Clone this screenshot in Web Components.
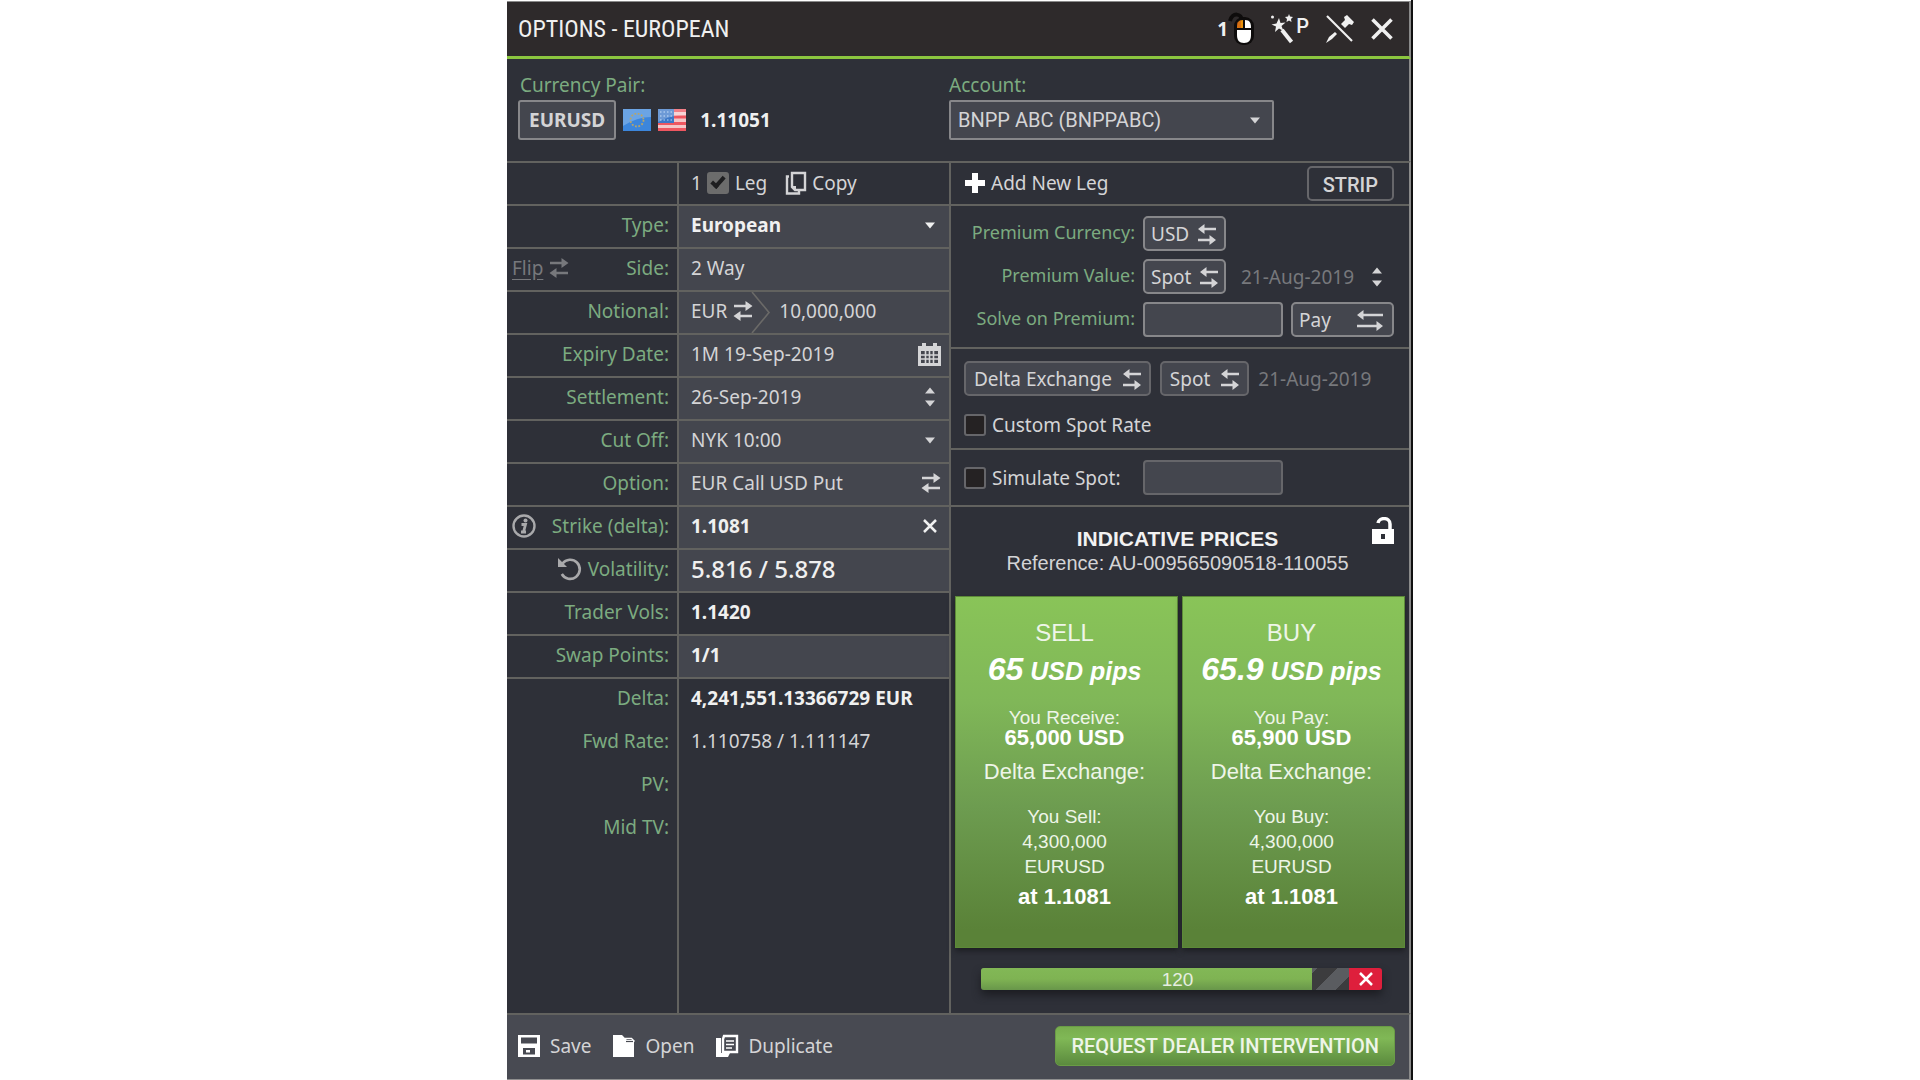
<!DOCTYPE html>
<html lang="en">
<head>
<meta charset="utf-8">
<title>Options - European</title>
<style>
  html, body { margin: 0; background: #fff; }
  body { min-height: 100vh; display: flex; justify-content: center; font-family: "Noto Sans", "Open Sans", sans-serif; }
</style>
</head>
<body>
<options-ticket></options-ticket>
<script>
const BASE = `
  *, *::before { box-sizing: border-box; }
  button, input, select { font: inherit; color: inherit; margin: 0; }
  button { cursor: pointer; }
  .plain { background: none; border: 0; padding: 0; display: inline-flex; align-items: center; }
  input, select { appearance: none; border-radius: 0; outline: 0; }
`;

function define(name, html, after) {
  const template = document.createElement('template');
  template.innerHTML = html;
  customElements.define(name, class extends HTMLElement {
    connectedCallback() {
      if (this.shadowRoot) return;
      this.attachShadow({ mode: 'open' }).append(template.content.cloneNode(true));
      if (after) after.call(this, this.shadowRoot);
    }
  });
}

/* Icons: [width, height, markup] */
const ICONS = {
  caret: [22, 22, '<path d="M6 8.500h10l-5 6z" fill="currentColor"/>'],
  spin: [22, 22, '<path d="M6 7.500h10l-5-6zM6 14.500h10l-5 6z" fill="currentColor"/>'],
  swap: [20, 20, '<path d="M1 5h12M7 15h12" stroke="currentColor" stroke-width="2.600"/><path d="M12.500 0l7 5-7 5zM7.500 10l-7 5 7 5z" fill="currentColor"/>'],
  swapBack: [18, 22, '<path d="M5 6h13M0 17h12" stroke="currentColor" stroke-width="2.600"/><path d="M6.500 1L0 6l6.500 5zM11.500 12l6.500 5-6.500 5z" fill="currentColor"/>'],
  swapWide: [28, 22, '<path d="M5 6h22M1 17h21" stroke="currentColor" stroke-width="2.400"/><path d="M7.500 1L1 6l6.500 5zM20.500 12l6.500 5-6.500 5z" fill="currentColor"/>'],
  close: [16, 16, '<path d="M2 2l12 12M14 2L2 14" stroke="currentColor" stroke-width="2.500"/>'],
  closeBig: [22, 22, '<path d="M1.500 1.500l19 19M20.500 1.500l-19 19" stroke="currentColor" stroke-width="3.600"/>'],
  calendar: [23, 23, '<path d="M1 3h3V0h4v3h7V0h4v3h4v20H0V3z" fill="currentColor"/><path d="M3 8h17v12H3z" fill="#44464e"/><path d="M3 12h17M3 16h17M7.500 8v12M11.500 8v12M15.500 8v12" stroke="currentColor" stroke-width="1.600"/>'],
  plus: [22, 22, '<path d="M11 1v20M1 11h20" stroke="currentColor" stroke-width="6"/>'],
  copy: [22, 24, '<path d="M7 2h13v17H10l-3-3z" fill="none" stroke="currentColor" stroke-width="2.400"/><path d="M4 5.500H2v17h12v-3" fill="none" stroke="currentColor" stroke-width="2.400"/><path d="M6 15l5 5v-5z" fill="currentColor"/>'],
  info: [24, 24, '<circle cx="12" cy="12" r="10.500" fill="none" stroke="currentColor" stroke-width="2.400"/><circle cx="13.500" cy="6.500" r="2" fill="currentColor"/><path d="M9.500 10.500h4l-2 7.500M9 18h5" fill="none" stroke="currentColor" stroke-width="2.800"/>'],
  undo: [24, 24, '<path d="M4.500 6.500A9.600 9.600 0 1 1 3.800 17" fill="none" stroke="currentColor" stroke-width="2.600"/><path d="M0 1v9h9z" fill="currentColor"/>'],
  lock: [24, 28, '<path d="M1 12h22v15H1z" fill="currentColor"/><path d="M7 6c1-6 12-6 12 1v6" fill="none" stroke="currentColor" stroke-width="3.500"/><path d="M10 17h4v5h-4z" fill="#2e3038"/>'],
  save: [24, 24, '<path d="M1 1h22v22H1z" fill="currentColor"/><path d="M4 3.500h16v6H4zM6 14h12v6.500H6z" fill="#484a52"/><path d="M9 16h4v2.500H9z" fill="currentColor"/>'],
  open: [24, 24, '<path d="M1 1h9l5 5h7v17H1z" fill="currentColor"/><path d="M13 4.500h6.500l3 3" fill="none" stroke="currentColor" stroke-width="1.400"/><path d="M14 7.500h7" stroke="#484a52" stroke-width="1.200"/>'],
  duplicate: [24, 24, '<path d="M1 4h5v15h9l-2 4H1z" fill="currentColor"/><path d="M9 2h13v16H8V5z" fill="none" stroke="currentColor" stroke-width="2.400"/><path d="M11 7h8M11 10.500h8M11 14h6" stroke="currentColor" stroke-width="1.400"/>'],
  mouse: [26, 34, '<path d="M14 9C14 1 4 0 2 9" fill="none" stroke="#0e0c0c" stroke-width="4"/><rect x="6" y="5" width="20" height="28" rx="9" fill="#0e0c0c"/><path d="M15 8v8H9c0-5 1-8 6-8z" fill="#e8920c"/><path d="M9 10.500l4-2V16H9z" fill="#c8501a" opacity=".5"/><path d="M17 8c5 0 6 3 6 8h-6z" fill="#fff"/><path d="M9 18h14v5c0 5-2 8-7 8s-7-3-7-8z" fill="#fff"/>'],
  wand: [24, 30, '<path d="M9 4l1.500 5 5-.500-4 3.500 2 5-4.500-2.500-4 3.500 1-5.500-4.500-2 5-1z" fill="currentColor"/><path d="M12 16l9.500 12" stroke="currentColor" stroke-width="4"/><path d="M19 0l1 2.500 3 .500-2 2 .500 3-2.500-1.500-2.500 1.500.500-3-2-2 3-.500z" fill="currentColor"/><circle cx="2.500" cy="3" r="1.500" fill="currentColor"/>'],
  pin: [30, 30, '<path d="M2 2l25 25" stroke="currentColor" stroke-width="2.200"/><path d="M1 29l3-6 6-5 2 2-5 5z" fill="currentColor"/><path d="M16 10l4-4-1-3 3-2 7 7-2 3-3-1-4 4z" fill="currentColor"/>'],
  eu: [28, 22, '<path d="M0 0h28v22H0z" fill="#3c86dc"/><path d="M0 0h28v8Q14 8 0 17z" fill="#6ba4e4"/><circle cx="14" cy="11" r="6.500" fill="none" stroke="#b5a56c" stroke-width="1.800" stroke-dasharray="1.800 1.600"/>'],
  us: [28, 22, '<path d="M0 0h28v22H0z" fill="#f4c6c8"/><path d="M0 1.500h28M0 8h28M0 14.500h28M0 20.500h28" stroke="#ee5660" stroke-width="3.200"/><path d="M0 0h16v14H0z" fill="#3c78c8"/><path d="M2 3h12M2 7h12M2 11h12" stroke="#8fb6e6" stroke-width="1.500" stroke-dasharray="1.500 2"/><path d="M0 0h28v6Q12 6 0 13z" fill="#fff" opacity=".25"/>'],
  chevron: [20, 41, '<path d="M1 0l17 20.500L1 41" fill="none" stroke="#6b6a68" stroke-width="1.600"/>']
};
define('ui-icon', `<style>:host{display:inline-flex;flex:none}svg{display:block}</style>`, function (root) {
  const [w, h, body] = ICONS[this.getAttribute('name')];
  root.append(document.createRange().createContextualFragment(
    `<svg width="${w}" height="${h}" viewBox="0 0 ${w} ${h}" aria-hidden="true">${body}</svg>`));
});

/* Outlined button with an optional icon */
define('pill-button', `<style>${BASE}
  :host { display: inline-flex; --line: #87878a; --pad: 6px; --gap: 9px; }
  :host([dim]) { --line: #66666a; --pad: 8px; --gap: 11px; }
  button { width: 100%; min-height: 35px; padding: 0 8px 0 var(--pad); display: flex; align-items: center; justify-content: space-between; gap: var(--gap);
    background: #44464e; border: 2px solid var(--line); border-radius: 5px; white-space: nowrap; line-height: 24px; }
  :host([strong]) button { min-height: 40px; padding: 0 9px; font-weight: 700; border-radius: 3px; }
  :host([strip]) button { background: none; justify-content: center; padding: 2px 14px 0; font: 500 20px Roboto, sans-serif; }
</style><button type="button"><slot></slot></button>`);

/* Tick box with its label */
define('tick-box', `<style>${BASE}
  :host { display: flex; }
  label { display: flex; align-items: center; gap: 6px; }
  input { width: 22px; height: 22px; background: #252223; border: 2px solid #66666a; border-radius: 3px; display: grid; place-items: center; }
  input:checked { background: #6c6c6c; border-color: #6c6c6c; }
  input:checked::before { content: ""; width: 14px; height: 8px; border: solid #1e1e20; border-width: 0 0 4px 4px; rotate: -48deg; translate: 0 -2px; }
</style><label><input type="checkbox"><slot></slot></label>`, function (root) {
  root.querySelector('input').checked = this.hasAttribute('checked');
});

/* One label / value line of the leg column */
define('leg-row', `<style>${BASE}
  :host { display: grid; grid-template-columns: 172fr 272fr; min-height: 43px; }
  .label, .value { display: flex; align-items: center; border: 0 solid #62625f; border-right-width: 2px; border-bottom-width: 2px; padding-bottom: 3px; min-width: 0; }
  .label { padding-left: 5px; padding-right: 8px; gap: 6px; color: #7cab80; }
  label { margin-left: auto; white-space: nowrap; }
  :host([hug]) label { margin-left: 0; }
  :host([hug]) .label { justify-content: flex-end; }
  .value { background: #44464e; padding-left: 12px; padding-right: 8px; }
  :host([dark]) .value { background: none; }
  :host([open]) .label, :host([open]) .value { border-bottom-width: 0; padding-bottom: 5px; }
  :host([bold]) .value { font-weight: 700; color: #f0f0f0; }
  :host([large]) .value { font-size: 24px; font-weight: 500; color: #f0f0f0; }
  #field { flex: 1; width: 0; min-width: 0; background: none; border: 0; padding: 0; white-space: nowrap; }
  ::slotted([slot=prefix]) { align-self: stretch; margin-bottom: -3px; }
</style>
<div class="label"><slot name="lead"></slot><label for="field"></label></div>
<div class="value"><slot name="prefix"></slot><slot name="post"></slot></div>`, function (root) {
  const label = root.querySelector('label');
  label.textContent = this.getAttribute('label') || '';
  const kind = this.getAttribute('kind'), value = this.getAttribute('value') || '';
  if (kind === 'none') { label.remove(); return; }
  const field = document.createElement(kind || 'input');
  field.id = 'field';
  if (kind === 'select') field.add(new Option(value));
  else field.value = value;
  root.querySelector('slot[name=post]').before(field);
});

define('ticket-title', `<style>${BASE}
  :host { display: flex; align-items: center; height: 58px; border-top: 1px solid #8a8a8a; border-bottom: 3px solid #8cc63f; background: #2e2a2b; padding: 0 16px 0 11px; color: #f0f0f0; }
  h1 { margin: 0; flex: 1; font: 400 24px/40px "Roboto Condensed", "Liberation Sans Narrow", "Liberation Sans", sans-serif; }
  nav { display: flex; align-items: center; gap: 16px; }
  .one { font: 700 19px "Noto Sans", sans-serif; }
  .p { font: 500 20px Roboto, sans-serif; align-self: flex-start; margin-left: 2px; }
</style>
<h1>OPTIONS - EUROPEAN</h1>
<nav>
  <button class="plain" aria-label="One click"><span class="one">1</span><ui-icon name="mouse"></ui-icon></button>
  <button class="plain" aria-label="Preferences"><ui-icon name="wand"></ui-icon><span class="p">P</span></button>
  <button class="plain" aria-label="Unpin"><ui-icon name="pin"></ui-icon></button>
  <button class="plain" aria-label="Close"><ui-icon name="closeBig"></ui-icon></button>
</nav>`);

define('ticket-header', `<style>${BASE}
  :host { display: grid; grid-template-columns: 442fr 460fr; padding: 13px 0 21px; }
  .label { display: block; color: #7cab80; line-height: 26px; margin-bottom: 2px; padding-left: 2px; }
  .pair { padding-left: 11px; }
  .line { display: flex; align-items: center; gap: 7px; }
  b { margin-left: 7px; color: #f0f0f0; }
  .account .label { padding-left: 0; }
  .select { display: flex; align-items: center; width: 325px; max-width: 100%; height: 40px; background: #44464e; border: 2px solid #87878a; border-radius: 2px; padding-right: 6px; }
  select { flex: 1; min-width: 0; height: 100%; border: 0; background: none; padding: 0 0 0 7px; font: 400 20px Roboto, sans-serif; }
</style>
<div class="pair"><span class="label">Currency Pair:</span>
  <div class="line"><pill-button strong>EURUSD</pill-button><ui-icon name="eu"></ui-icon><ui-icon name="us"></ui-icon><b>1.11051</b></div></div>
<div class="account"><label class="label" for="account">Account:</label>
  <div class="select"><select id="account"><option>BNPP ABC (BNPPABC)</option></select><ui-icon name="caret"></ui-icon></div></div>`);

define('leg-column', `<style>${BASE}
  :host { display: flex; flex-direction: column; }
  .rest { flex: 1; }
  .leg { display: flex; align-items: center; gap: 5px; padding-bottom: 2px; }
  .leg .plain { margin-left: 13px; gap: 5px; }
  a { color: #77787c; display: flex; gap: 6px; align-items: center; text-decoration: none; }
  u { text-underline-offset: 4px; }
  .grey { color: #a9a9ab; }
  .ccy { display: flex; align-items: center; }
  .ccy .plain { gap: 6px; padding-bottom: 3px; margin-right: -2px; }
  .ccy ui-icon[name=chevron] { margin-right: 8px; }
  .clear { padding: 0 3px; }
</style>
<leg-row kind="none" dark><div slot="prefix" class="leg">1 <tick-box checked>Leg</tick-box><button class="plain"><ui-icon name="copy"></ui-icon>Copy</button></div></leg-row>
<leg-row label="Type:" kind="select" value="European" bold><ui-icon slot="post" name="caret"></ui-icon></leg-row>
<leg-row label="Side:" kind="output" value="2 Way"><a slot="lead" href="#"><u>Flip</u><ui-icon name="swap"></ui-icon></a></leg-row>
<leg-row label="Notional:" value="10,000,000"><div slot="prefix" class="ccy"><button class="plain">EUR<ui-icon name="swap"></ui-icon></button><ui-icon name="chevron"></ui-icon></div></leg-row>
<leg-row label="Expiry Date:" value="1M 19-Sep-2019"><ui-icon slot="post" name="calendar"></ui-icon></leg-row>
<leg-row label="Settlement:" value="26-Sep-2019"><ui-icon slot="post" name="spin"></ui-icon></leg-row>
<leg-row label="Cut Off:" kind="select" value="NYK 10:00"><ui-icon slot="post" name="caret"></ui-icon></leg-row>
<leg-row label="Option:" value="EUR Call USD Put"><ui-icon slot="post" name="swap"></ui-icon></leg-row>
<leg-row label="Strike (delta):" value="1.1081" bold><ui-icon slot="lead" name="info" class="grey"></ui-icon><button slot="post" class="plain clear" aria-label="Clear strike"><ui-icon name="close"></ui-icon></button></leg-row>
<leg-row label="Volatility:" value="5.816 / 5.878" large hug><ui-icon slot="lead" name="undo" class="grey"></ui-icon></leg-row>
<leg-row label="Trader Vols:" kind="output" value="1.1420" dark bold></leg-row>
<leg-row label="Swap Points:" value="1/1" bold></leg-row>
<leg-row label="Delta:" kind="output" value="4,241,551.13366729 EUR" dark bold open></leg-row>
<leg-row label="Fwd Rate:" kind="output" value="1.110758 / 1.111147" dark open></leg-row>
<leg-row label="PV:" kind="output" dark open></leg-row>
<leg-row label="Mid TV:" kind="output" dark open></leg-row>
<leg-row class="rest" kind="none" dark open></leg-row>`);

define('price-card', `<style>${BASE}
  :host { display: block; flex: 1; }
  button { width: 100%; padding: 22px 4px 38px 0; border: 1px solid #5d8a38; background: linear-gradient(#89c458, #80b758 30%, #6d9c50 60%, #5a8238 95%); display: block; text-align: center;
    font: 400 19px/25px "Liberation Sans", sans-serif; color: #eef5e8; box-shadow: 0 3px 6px #1c1d22; }
  span { display: block; }
  .side { font-size: 24px; line-height: 28px; }
  .pips { font: italic 700 25px/44px "Liberation Sans", sans-serif; color: #fff; }
  .pips ::slotted([slot=pips]) { font-size: 32px; }
  .get { line-height: 20px; margin-top: 15px; }
  .cash, .at { font-size: 22px; font-weight: 700; color: #fff; }
  .cash { line-height: 20px; }
  .exch { font-size: 22px; line-height: 24px; margin: 12px 0 20px; }
  .at { line-height: 24px; margin-top: 6px; }
</style>
<button type="button"><span class="side"><slot name="side"></slot></span><span class="pips"><slot name="pips"></slot> USD pips</span>
<span class="get"><slot name="get"></slot></span><span class="cash"><slot name="cash"></slot></span>
<span class="exch">Delta Exchange:</span><span><slot name="deal"></slot></span><span>4,300,000</span><span>EURUSD</span><span class="at">at 1.1081</span></button>`);

define('premium-panel', `<style>${BASE}
  :host { display: flex; flex-direction: column; }
  section { border-bottom: 2px solid #62625f; }
  .add { display: flex; align-items: center; justify-content: space-between; height: 43px; padding: 0 15px 0 13px; }
  .add .plain { gap: 5px; padding-bottom: 2px; }
  .add ui-icon { color: #fff; }
  .premium { display: grid; grid-template-columns: 184px 1fr; gap: 8px; padding: 10px 15px 10px 0; }
  .premium > label, .premium > span { color: #7cab80; font-size: 18px; text-align: right; line-height: 33px; white-space: nowrap; }
  .line { display: flex; align-items: center; gap: 8px; }
  .grey { color: #77787c; }
  .date { margin-left: 7px; flex: 1; }
  .spin { margin-right: 6px; }
  .w { width: 83px; }
  .pay { flex: 1; }
  input { width: 140px; height: 35px; background: #44464e; border: 2px solid #87878a; border-radius: 4px; padding: 0 8px; }
  .exchange { padding: 12px 13px 10px; }
  .exchange .line { margin-bottom: 16px; gap: 9px; }
  .simulate { display: grid; grid-template-columns: 170px 1fr; gap: 9px; align-items: center; padding: 10px 13px; }
  .simulate input { border-color: #66666a; }
  header { display: grid; grid-template-columns: 1fr auto 1fr; padding: 10px 14px 8px 9px; font: 400 20px/25px "Liberation Sans", sans-serif; text-align: center; min-height: 89px; }
  h2 { margin: 9px 0 0; font: inherit; font-size: 21px; font-weight: 700; color: #f2f2f2; }
  header ui-icon { justify-self: end; color: #fff; }
  .cards { display: flex; gap: 4px; padding: 0 4px; }
  .timer { display: flex; margin: 20px 27px 23px 30px; height: 22px; border-radius: 3px; box-shadow: 0 5px 8px #1c1d22; }
  .track { flex: 1; position: relative; display: flex; border-radius: 3px 0 0 3px; overflow: hidden; background: repeating-linear-gradient(135deg, #5a5c60 0 14px, #3c3c3e 14px 28px); }
  .fill { width: 90%; background: linear-gradient(#82b856, #7fb353 50%, #68964a); }
  .track span { position: absolute; inset: 0; padding-left: 25px; text-align: center; font: 400 19px/24px "Liberation Sans", sans-serif; color: #e6eee0; }
  .timer button { width: 33px; justify-content: center; background: #de1f3c; color: #fff; border-radius: 0 3px 3px 0; }
</style>
<section class="add"><button class="plain"><ui-icon name="plus"></ui-icon>Add New Leg</button><pill-button strip dim>STRIP</pill-button></section>
<section class="premium">
  <span>Premium Currency:</span><div class="line"><pill-button class="w">USD<ui-icon name="swapBack"></ui-icon></pill-button></div>
  <span>Premium Value:</span><div class="line"><pill-button class="w">Spot<ui-icon name="swapBack"></ui-icon></pill-button><span class="grey date">21-Aug-2019</span><ui-icon class="spin" name="spin"></ui-icon></div>
  <label for="solve">Solve on Premium:</label><div class="line"><input id="solve"><pill-button class="pay">Pay<ui-icon name="swapWide"></ui-icon></pill-button></div>
</section>
<section class="exchange">
  <div class="line"><pill-button dim>Delta Exchange<ui-icon name="swapBack"></ui-icon></pill-button><pill-button dim>Spot<ui-icon name="swapBack"></ui-icon></pill-button><span class="grey">21-Aug-2019</span></div>
  <tick-box>Custom Spot Rate</tick-box>
</section>
<section class="simulate"><tick-box>Simulate Spot:</tick-box><input aria-label="Simulate spot"></section>
<header><span></span><div><h2>INDICATIVE PRICES</h2>Reference: AU-009565090518-110055</div><ui-icon name="lock"></ui-icon></header>
<div class="cards">
  <price-card><span slot="side">SELL</span><span slot="pips">65</span><span slot="get">You Receive:</span><span slot="cash">65,000 USD</span><span slot="deal">You Sell:</span></price-card>
  <price-card><span slot="side">BUY</span><span slot="pips">65.9</span><span slot="get">You Pay:</span><span slot="cash">65,900 USD</span><span slot="deal">You Buy:</span></price-card>
</div>
<div class="timer"><div class="track"><div class="fill"></div><span>120</span></div><button class="plain" aria-label="Cancel"><ui-icon name="close"></ui-icon></button></div>`);

define('ticket-footer', `<style>${BASE}
  :host { display: flex; align-items: center; gap: 21px; height: 68px; border-top: 2px solid #62625f; border-bottom: 2px solid #8f8f8f; background: #484a52; padding: 0 14px 2px 10px; }
  .plain { gap: 9px; }
  ui-icon { color: #fff; }
  .request { margin-left: auto; height: 40px; padding: 0 15px; border: 1px solid #6a9c46; border-radius: 5px; background: linear-gradient(#78ad4e, #80b856 30%, #5b8a3e); color: #eef5e8; font: 500 20px Roboto, sans-serif; white-space: nowrap; }
</style>
<button class="plain"><ui-icon name="save"></ui-icon>Save</button>
<button class="plain"><ui-icon name="open"></ui-icon>Open</button>
<button class="plain"><ui-icon name="duplicate"></ui-icon>Duplicate</button>
<button class="request">REQUEST DEALER INTERVENTION</button>`);

define('options-ticket', `<style>${BASE}
  :host { box-sizing: border-box; display: flex; flex-direction: column; width: 100%; max-width: 906px; min-height: 100vh; padding-top: 1px; font-size: 19px; line-height: 26px; color: #d4d4d6; background: linear-gradient(#fff 0 1px, #2e3038 1px); border-right: 2px solid #111; }
  ticket-title, ticket-header, main, ticket-footer { border-right: 2px solid #8a8a8a; }
  ticket-title, ticket-footer { box-sizing: border-box; }
  main { flex: 1; display: grid; grid-template-columns: 444fr 458fr; border-top: 2px solid #62625f; }
</style>
<ticket-title></ticket-title>
<ticket-header></ticket-header>
<main><leg-column></leg-column><premium-panel></premium-panel></main>
<ticket-footer></ticket-footer>`);
</script>
</body>
</html>
